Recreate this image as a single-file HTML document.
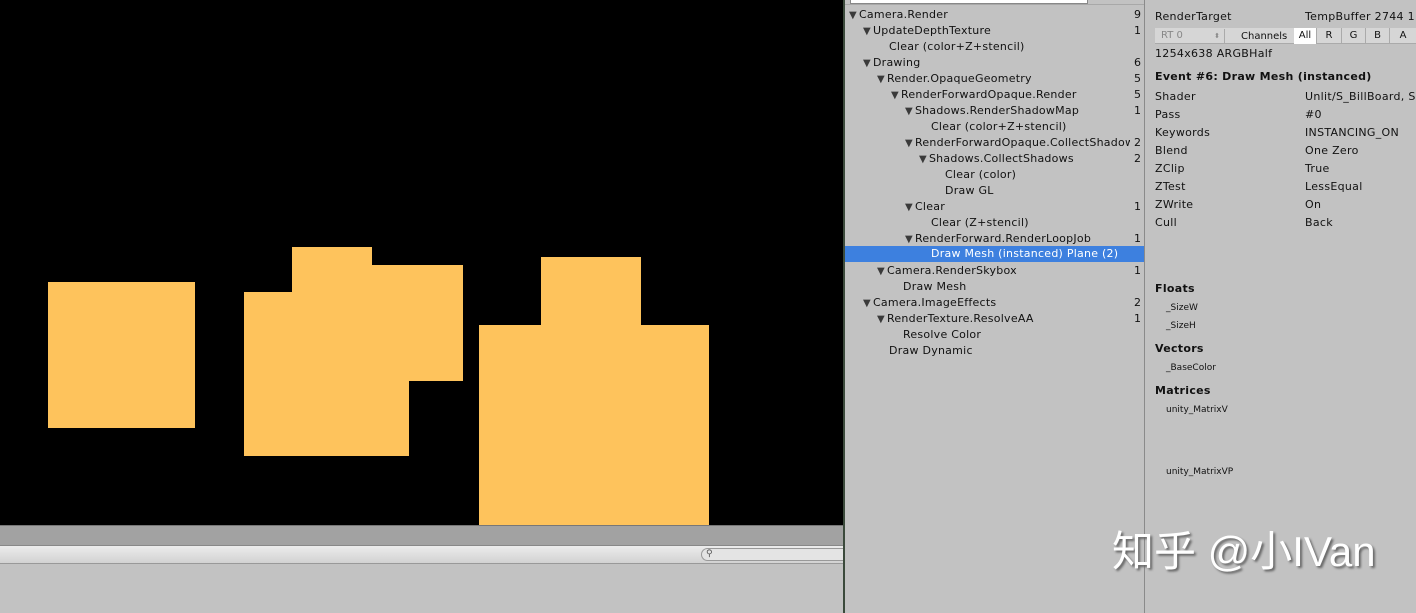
<!DOCTYPE html>
<html><head><meta charset="utf-8"><style>
*{margin:0;padding:0;box-sizing:border-box}
body{width:1416px;height:613px;overflow:hidden;background:#c2c2c2;position:relative;font-family:"DejaVu Sans","Liberation Sans",sans-serif;font-size:11px;color:#111}
.a{position:absolute;white-space:nowrap}
.y{position:absolute;background:#fec35c}
.t{position:absolute;height:16px;line-height:16px;white-space:nowrap;letter-spacing:0.25px;margin-top:1px}
.ar{font-size:10px;color:#3a3a3a;margin-right:2px}
.n{position:absolute;left:1134px;line-height:16px;height:16px;margin-top:1px}
.l{position:absolute;left:1155px;line-height:18px;letter-spacing:0.3px}
.v{position:absolute;left:1305px;line-height:18px;letter-spacing:0.3px}
.b{font-weight:bold}
</style></head><body>
<div class="a" style="left:0;top:0;width:843px;height:525px;background:#000"></div>
<div class="y" style="left:48px;top:282px;width:147px;height:146px"></div>
<div class="y" style="left:292px;top:247px;width:80px;height:40px"></div>
<div class="y" style="left:292px;top:265px;width:171px;height:116px"></div>
<div class="y" style="left:244px;top:292px;width:165px;height:164px"></div>
<div class="y" style="left:541px;top:257px;width:100px;height:70px"></div>
<div class="y" style="left:479px;top:325px;width:230px;height:200px"></div>
<div class="a" style="left:0;top:525px;width:843px;height:20px;background:#a2a2a2;border-top:1px solid #777"></div>
<div class="a" style="left:0;top:545px;width:843px;height:19px;background:linear-gradient(#ececec,#d2d2d2);border-top:1px solid #888;border-bottom:1px solid #999"></div>
<div class="a" style="left:701px;top:548px;width:142px;height:13px;border:1px solid #999;border-right:none;border-radius:7px 0 0 7px;background:#e4e4e4;font-size:9px;color:#555;padding-left:4px;line-height:11px">⚲</div>
<div class="a" style="left:843px;top:0;width:2px;height:613px;background:#3b4a3b"></div>
<div class="a" style="left:1144px;top:0;width:1px;height:613px;background:#8a8a8a"></div>
<div class="a" style="left:850px;top:0;width:238px;height:4px;background:#fff;border:1px solid #888;border-top:none"></div>
<div class="a" style="left:845px;top:4px;width:299px;height:1px;background:#a8a8a8"></div>
<div class="a" style="left:845px;top:246px;width:299px;height:16px;background:#3d80df"></div>

<div class="t" style="left:849px;top:6px"><span class="ar">▼</span>Camera.Render</div><div class="n" style="top:6px">9</div>
<div class="t" style="left:863px;top:22px"><span class="ar">▼</span>UpdateDepthTexture</div><div class="n" style="top:22px">1</div>
<div class="t" style="left:889px;top:38px">Clear (color+Z+stencil)</div>
<div class="t" style="left:863px;top:54px"><span class="ar">▼</span>Drawing</div><div class="n" style="top:54px">6</div>
<div class="t" style="left:877px;top:70px"><span class="ar">▼</span>Render.OpaqueGeometry</div><div class="n" style="top:70px">5</div>
<div class="t" style="left:891px;top:86px"><span class="ar">▼</span>RenderForwardOpaque.Render</div><div class="n" style="top:86px">5</div>
<div class="t" style="left:905px;top:102px"><span class="ar">▼</span>Shadows.RenderShadowMap</div><div class="n" style="top:102px">1</div>
<div class="t" style="left:931px;top:118px">Clear (color+Z+stencil)</div>
<div class="t" style="left:905px;top:134px;width:225px;overflow:hidden"><span class="ar">▼</span>RenderForwardOpaque.CollectShadows</div><div class="n" style="top:134px">2</div>
<div class="t" style="left:919px;top:150px"><span class="ar">▼</span>Shadows.CollectShadows</div><div class="n" style="top:150px">2</div>
<div class="t" style="left:945px;top:166px">Clear (color)</div>
<div class="t" style="left:945px;top:182px">Draw GL</div>
<div class="t" style="left:905px;top:198px"><span class="ar">▼</span>Clear</div><div class="n" style="top:198px">1</div>
<div class="t" style="left:931px;top:214px">Clear (Z+stencil)</div>
<div class="t" style="left:905px;top:230px"><span class="ar">▼</span>RenderForward.RenderLoopJob</div><div class="n" style="top:230px">1</div>
<div class="t" style="left:931px;top:245px;color:#fff">Draw Mesh (instanced) Plane (2)</div>
<div class="t" style="left:877px;top:262px"><span class="ar">▼</span>Camera.RenderSkybox</div><div class="n" style="top:262px">1</div>
<div class="t" style="left:903px;top:278px">Draw Mesh</div>
<div class="t" style="left:863px;top:294px"><span class="ar">▼</span>Camera.ImageEffects</div><div class="n" style="top:294px">2</div>
<div class="t" style="left:877px;top:310px"><span class="ar">▼</span>RenderTexture.ResolveAA</div><div class="n" style="top:310px">1</div>
<div class="t" style="left:903px;top:326px">Resolve Color</div>
<div class="t" style="left:889px;top:342px">Draw Dynamic</div>

<div class="l" style="top:8px">RenderTarget</div><div class="v" style="top:8px">TempBuffer 2744 1</div>
<div class="a" style="left:1155px;top:28px;width:261px;height:16px;background:#d6d6d6;border-bottom:1px solid #aaa"></div>
<div class="a" style="left:1157px;top:29px;width:68px;height:14px;border-right:1px solid #aaa;color:#888;font-size:10px;line-height:14px;padding-left:4px">RT 0<span style="position:absolute;right:4px;font-size:7px">⬍</span></div>
<div class="a" style="left:1241px;top:30px;font-size:10px;line-height:14px">Channels</div>
<div class="a" style="left:1294px;top:28px;width:22px;height:16px;background:#fff;text-align:center;line-height:16px;font-size:10px">All</div>
<div class="a" style="left:1316px;top:28px;width:25px;height:16px;border-left:1px solid #aaa;text-align:center;line-height:16px;font-size:10px">R</div>
<div class="a" style="left:1341px;top:28px;width:24px;height:16px;border-left:1px solid #aaa;text-align:center;line-height:16px;font-size:10px">G</div>
<div class="a" style="left:1365px;top:28px;width:24px;height:16px;border-left:1px solid #aaa;text-align:center;line-height:16px;font-size:10px">B</div>
<div class="a" style="left:1389px;top:28px;width:27px;height:16px;border-left:1px solid #aaa;text-align:center;line-height:16px;font-size:10px">A</div>
<div class="l" style="top:45px">1254x638 ARGBHalf</div>
<div class="l b" style="top:68px">Event #6: Draw Mesh (instanced)</div>
<div class="l" style="top:88px">Shader</div><div class="v" style="top:88px">Unlit/S_BillBoard, S</div>
<div class="l" style="top:106px">Pass</div><div class="v" style="top:106px">#0</div>
<div class="l" style="top:124px">Keywords</div><div class="v" style="top:124px">INSTANCING_ON</div>
<div class="l" style="top:142px">Blend</div><div class="v" style="top:142px">One Zero</div>
<div class="l" style="top:160px">ZClip</div><div class="v" style="top:160px">True</div>
<div class="l" style="top:178px">ZTest</div><div class="v" style="top:178px">LessEqual</div>
<div class="l" style="top:196px">ZWrite</div><div class="v" style="top:196px">On</div>
<div class="l" style="top:214px">Cull</div><div class="v" style="top:214px">Back</div>
<div class="l b" style="top:280px">Floats</div>
<div class="a" style="left:1166px;top:303px;font-size:9px">_SizeW</div>
<div class="a" style="left:1166px;top:321px;font-size:9px">_SizeH</div>
<div class="l b" style="top:340px">Vectors</div>
<div class="a" style="left:1166px;top:363px;font-size:9px">_BaseColor</div>
<div class="l b" style="top:382px">Matrices</div>
<div class="a" style="left:1166px;top:405px;font-size:9px">unity_MatrixV</div>
<div class="a" style="left:1166px;top:467px;font-size:9px">unity_MatrixVP</div>
<div class="a" style="left:1112px;top:526px;font-size:42px;line-height:52px;color:#fff;font-family:'Liberation Sans','Noto Sans CJK SC',sans-serif;text-shadow:2px 2px 2px #666">知乎 @小IVan</div>
</body></html>
